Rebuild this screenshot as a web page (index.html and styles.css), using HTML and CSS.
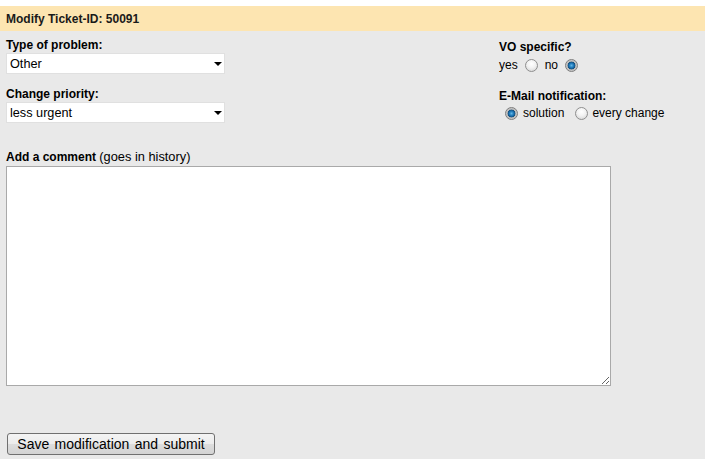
FILE: index.html
```html
<!DOCTYPE html>
<html>
<head>
<meta charset="utf-8">
<link rel="stylesheet" href="styles.css">
</head>
<body>
<div class="page">
  <div class="title">Modify Ticket-ID: 50091</div>
  <form class="panel">
    <div class="top">
      <div class="left">
        <div class="label">Type of problem:</div>
        <div class="select-wrap">
          <select class="select"><option>Other</option></select>
        </div>
        <div class="label label-2">Change priority:</div>
        <div class="select-wrap">
          <select class="select"><option>less urgent</option></select>
        </div>
      </div>
      <div class="right">
        <div class="label">VO specific?</div>
        <div class="row row-vo">
          <span class="txt">yes</span>
          <span class="radio r-yes"></span>
          <span class="txt">no</span>
          <span class="radio checked r-no"></span>
        </div>
        <div class="label label-mail">E-Mail notification:</div>
        <div class="row row-mail">
          <span class="radio checked r-sol"></span>
          <span class="txt">solution</span>
          <span class="radio r-every"></span>
          <span class="txt">every change</span>
        </div>
      </div>
    </div>
    <div class="comment-label"><b>Add a comment</b> <span class="hint">(goes in history)</span></div>
    <textarea class="comment"></textarea>
    <div class="actions">
      <button type="button" class="btn">Save modification and submit</button>
    </div>
  </form>
</div>
</body>
</html>
```
FILE: styles.css
```css
html, body {
  margin: 0;
  padding: 0;
  background: #ffffff;
}
body {
  font-family: "Liberation Sans", Arial, sans-serif;
  font-size: 12px;
  color: #000;
}
.page {
  padding-top: 6px;
}
.title {
  height: 25px;
  line-height: 26px;
  background: #fde5b1;
  font-weight: bold;
  padding-left: 6px;
  color: #1a1a1a;
}
.panel {
  background: #e9e9e9;
  height: 428px;
  padding: 0 6px;
  box-sizing: border-box;
  display: flex;
  flex-direction: column;
  margin: 0;
}
.top {
  display: grid;
  grid-template-columns: 493px 1fr;
}
.label {
  font-weight: bold;
  line-height: 15px;
  height: 15px;
}
.left .label {
  margin-top: 7px;
}
.left .label-2 {
  margin-top: 13px;
}
.select-wrap {
  position: relative;
  width: 219px;
  height: 21px;
}
.select {
  appearance: none;
  -webkit-appearance: none;
  width: 219px;
  height: 21px;
  box-sizing: border-box;
  border: 1px solid #e0e0e0;
  border-radius: 0;
  background: #fff;
  font-family: "Liberation Sans", Arial, sans-serif;
  font-size: 12.7px;
  color: #000;
  padding: 0 0 0 3px;
  margin: 0;
  outline: none;
}
.select-wrap::after {
  content: "";
  position: absolute;
  left: 208px;
  top: 9px;
  border-left: 4px solid transparent;
  border-right: 4px solid transparent;
  border-top: 4px solid #000;
  pointer-events: none;
}
.right .label {
  margin-top: 9px;
}
.right .label-mail {
  margin-top: 16px;
}
.row {
  display: flex;
  align-items: flex-start;
  height: 15px;
  line-height: 15px;
}
.row-vo {
  margin-top: 3px;
}
.row-mail {
  margin-top: 2px;
}
.txt {
  white-space: nowrap;
}
.radio {
  flex: none;
  width: 13px;
  height: 13px;
  box-sizing: border-box;
  border-radius: 50%;
  border: 1px solid #8f8f8f;
  background: radial-gradient(circle at 50% 35%, #ffffff 0%, #f2f2f2 45%, #cfcfcf 100%);
  margin-top: 1px;
  position: relative;
}
.radio.checked {
  background: radial-gradient(circle at 50% 50%, #62b6e6 0, #1e78b8 2.2px, #14507f 3.6px, #b8b8b8 4.2px, #e8e8e8 100%);
  border-color: #7d7d7d;
}
.r-yes { margin-left: 7px; margin-right: 7px; }
.r-no { margin-left: 7px; }
.r-sol { margin-left: 6px; margin-right: 5px; }
.r-every { margin-left: 11px; margin-right: 4px; }
.comment-label {
  margin-top: 26px;
  line-height: 15px;
  height: 15px;
}
.comment-label b {
  font-weight: bold;
}
.hint {
  font-size: 12.8px;
}
.comment {
  display: block;
  width: 605px;
  height: 220px;
  box-sizing: border-box;
  border: 1px solid #a9a9a9;
  background: #fff;
  margin: 2px 0 0 0;
  padding: 2px;
  resize: both;
  font-family: "Liberation Sans", Arial, sans-serif;
  font-size: 12px;
  border-radius: 0;
}
.actions {
  margin-top: 47px;
  padding-left: 1px;
}
.btn {
  width: 208px;
  height: 22px;
  box-sizing: border-box;
  border: 1px solid #707070;
  border-radius: 3px;
  background: linear-gradient(#f4f4f4 0%, #ececec 50%, #dddddd 51%, #d3d3d3 100%);
  font-family: "Liberation Sans", Arial, sans-serif;
  font-size: 14px;
  color: #000;
  padding: 0;
  margin: 0;
  line-height: 20px;
  word-spacing: 1.5px;
}
```
